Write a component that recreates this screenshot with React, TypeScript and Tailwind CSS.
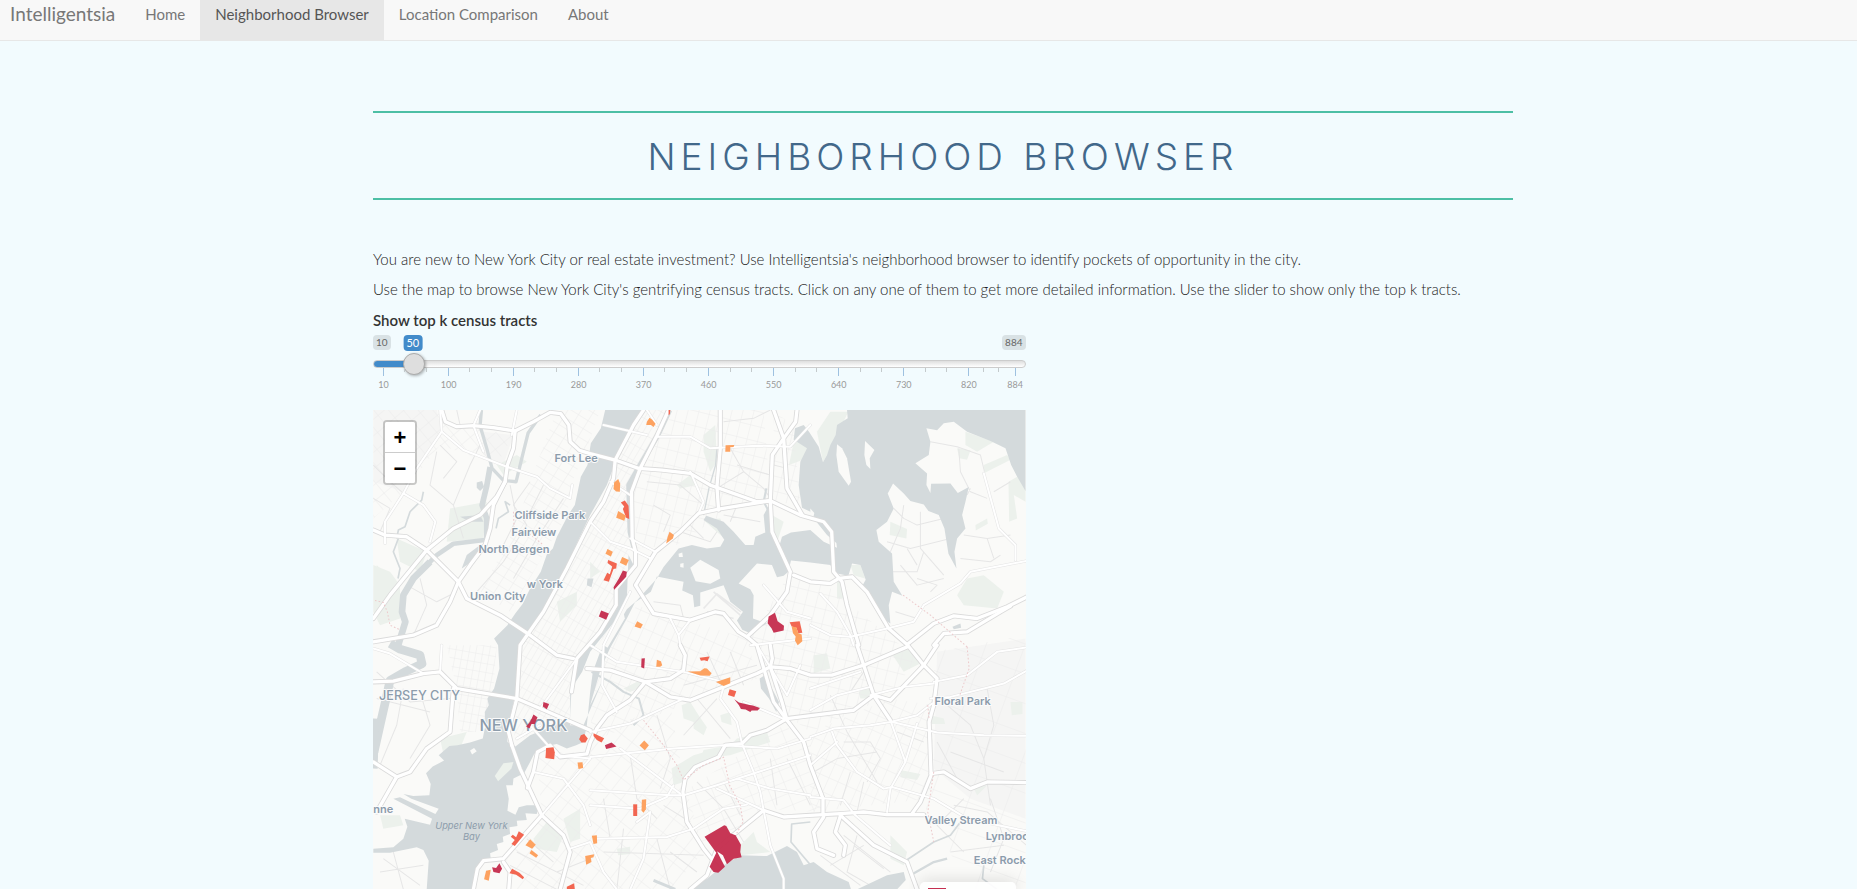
import { useState } from "react";

const NAV = ["Home", "Neighborhood Browser", "Location Comparison", "About"];
const MIN = 10;
const MAX = 884;
const TICKS = [10, 100, 190, 280, 370, 460, 550, 640, 730, 820, 884];

const LAND = "#fafaf8";
const WATER = "#d4dadc";

/* Drawing space of the map: three units to one CSS pixel. */
const WATER_AREAS = [
  // Hudson River and Upper Bay
  "M705 15L692 70L662 115L652 180L632 215L622 262L614 300L594 330L560 396L548 430L530 448L512 500L480 550L458 596L436 624L412 660L372 700L384 720L388 790L372 850L352 880L356 900L344 920L346 960L338 1000L300 1012L262 1020L238 1022L206 1050L222 1066L188 1084L168 1104L182 1136L178 1170L130 1172L100 1166L124 1180L206 1210L196 1226L90 1176L70 1180L186 1240L180 1258L104 1240L112 1264L100 1300L70 1326L10 1330L10 1342L60 1342L140 1326L160 1334L176 1366L170 1452L312 1452L322 1384L340 1364L362 1360L360 1344L384 1334L380 1316L400 1310L398 1294L420 1286L418 1266L442 1262L440 1246L470 1244L466 1224L500 1226L505 1200L470 1200L446 1206L436 1228L412 1216L416 1180L408 1140L428 1140L430 1120L462 1104L480 1070L492 1046L520 1024L560 1016L590 1030L618 1020L640 1010L650 960L660 860L668 800L690 740L706 720L742 660L770 612L800 586L860 520L880 486L925 430L965 420L1010 430L1050 425L1062 404L1040 370L1000 345L1008 332L1060 350L1090 380L1125 420L1150 420L1155 395L1185 382L1180 330L1196 300L1208 330L1205 384L1225 430L1235 395L1262 382L1320 375L1360 410L1400 428L1398 414L1370 390L1340 352L1320 320L1295 308L1285 240L1290 170L1310 130L1270 104L1274 70L1300 60L1316 80L1345 125L1358 172L1370 150L1380 120L1396 90L1400 60L1432 40L1430 15L1965 15L1965 258L1940 215L1922 180L1905 130L1860 108L1790 80L1750 50L1720 55L1700 76L1668 70L1680 110L1675 150L1635 175L1670 205L1668 240L1680 264L1682 236L1740 235L1762 264L1795 246L1785 290L1775 330L1785 370L1760 400L1752 440L1758 490L1734 446L1722 370L1705 330L1674 318L1660 298L1620 288L1600 265L1568 235L1552 265L1570 310L1550 350L1518 375L1525 410L1565 445L1570 530L1596 572L1565 560L1555 600L1560 655L1535 640L1505 590L1476 542L1486 524L1470 480L1445 475L1434 512L1392 504L1380 480L1320 472L1262 466L1254 500L1240 512L1220 516L1205 480L1160 475L1105 535L1140 552L1150 570L1148 640L1190 655L1140 684L1116 674L1100 646L1118 620L1080 590L1060 540L990 562L990 602L972 606L968 570L936 556L940 530L860 514L842 560L812 580L794 592L770 640L720 728L692 790L660 900L700 820L640 960L600 960L600 860L608 800L640 730L700 660L740 610L735 565L790 480L775 450L770 580L740 640L660 740L636 800L604 850L600 940L540 966L480 990L436 1024L412 1010L412 970L440 850L444 720L462 716L520 610L590 480L660 330L710 240L740 160L785 60L815 15Z",
  // Jamaica Bay
  "M950 1452L1010 1420L1060 1380L1110 1350L1190 1352L1250 1322L1280 1340L1300 1380L1330 1370L1370 1400L1435 1430L1442 1452Z",
  "M1460 1452L1550 1410L1600 1400L1606 1424L1580 1452Z",
  "M270 335L330 330L340 350L300 350Z",
  "M320 232L336 228L342 246L330 258L320 248Z",
  "M290 450L330 420L320 460L275 490Z",
  "M1168 820L1190 806L1200 840L1226 890L1218 920L1196 880L1172 850Z",
  "M1746 665L1770 655L1772 668L1750 672Z",
  "M652 520L670 520L664 546L650 540Z",
];

const RIVERS: [string, number][] = [
  ["M512 30L474 84L460 140L438 230L400 226L366 190L350 130L330 62L334 15", 10],
  ["M360 186L350 242L336 300L350 340L350 404", 17],
  ["M350 404L250 416L200 450L150 500", 14],
  ["M180 470L130 520L100 570L96 620L106 650L80 735", 20],
  ["M60 715L90 732L150 750L156 776L104 800L60 826L46 890L30 960L12 1040", 26],
  ["M16 940L12 1090", 22],
  ["M898 15L862 92L816 170L776 240L780 380L792 430", 16],
  ["M160 260L155 285L120 320L105 365L85 375L80 400", 5],
  ["M85 400L70 440L90 490L84 520", 5],
  ["M420 300L405 290L415 320L385 340L378 370", 5],
  ["M1040 130L1036 180L1016 250L1000 330", 4],
  ["M1188 250L1180 290L1196 320", 6],
  ["M664 800L720 830L760 860L806 880L820 930L790 960", 6],
  ["M1000 1330L1060 1398", 5],
  ["M850 1425L915 1452", 9],
  ["M1320 1250L1264 1256L1262 1310L1320 1378", 5],
  ["M1600 1370L1690 1310L1740 1290L1770 1250", 5],
  ["M1620 1410L1690 1370L1730 1360", 7],
  ["M1840 1380L1836 1420L1880 1452", 5],
];

const ISLANDS = [
  "M960 488L990 464L1045 495L1050 520L1020 536L976 528Z",
  "M925 446L936 442L938 456L926 456Z",
  "M930 476L940 474L940 488L930 486Z",
  "M1400 118L1415 130L1430 160L1442 230L1435 242L1405 200L1398 150Z",
  "M1484 108L1512 135L1498 160L1500 192L1488 180L1482 150Z",
  "M700 720L742 650L760 622L764 640L712 728Z",
  "M1320 310L1332 324L1328 340L1320 344Z",
];

const PARKS = [
  "M10 480L60 500L90 540L90 640L30 660L10 620Z",
  "M80 400L170 440L150 500L90 470Z",
  "M240 310L350 290L340 400L230 410Z",
  "M380 180L440 150L470 170L400 210Z",
  "M560 590L620 560L620 600L570 650Z",
  "M20 480L80 540L84 640L30 620Z",
  "M1000 90L1035 60L1040 170L1020 200L1000 140Z",
  "M920 240L960 210L980 240L930 250Z",
  "M1000 345L1050 340L1066 380L1062 400Z",
  "M1270 110L1310 110L1310 160L1256 180Z",
  "M1340 80L1380 20L1434 20L1400 90L1370 150L1358 172Z",
  "M1188 320L1240 350L1224 400L1210 420Z",
  "M660 470L690 500L660 520Z",
  "M1440 480L1470 480L1484 520L1450 510Z",
  "M1560 350L1610 372L1608 400L1558 390Z",
  "M1785 80L1870 110L1820 140L1785 120Z",
  "M1840 180L1910 150L1920 164L1842 204Z",
  "M1914 230L1940 215L1965 250L1965 290L1930 270L1940 340L1916 350Z",
  "M1790 520L1840 510L1900 560L1880 610L1780 600L1760 570Z",
  "M1760 130L1800 136L1790 164L1766 160Z",
  "M1815 360L1850 340L1852 356L1816 376Z",
  "M1400 520L1420 530L1420 580L1400 580Z",
  "M934 900L960 890L985 930L1010 966L1000 990L970 970L970 950L940 940Z",
  "M1050 930L1080 920L1084 960L1054 950Z",
  "M1000 1034L1080 1020L1100 1000L1190 980L1200 1010L1080 1050L990 1060Z",
  "M904 1090L970 1050L1040 1030L1060 1050L980 1080L940 1130L910 1140Z",
  "M760 850L820 820L824 840L780 860Z",
  "M1110 1320L1150 1280L1160 1310L1200 1340L1110 1350Z",
  "M740 1330L780 1324L780 1346L744 1350Z",
  "M490 1300L530 1250L580 1290L560 1340L500 1330Z",
  "M580 1240L630 1210L630 1300L600 1310Z",
  "M210 1000L290 980L270 1030L220 1046Z",
  "M374 1112L400 1074L430 1070L424 1090L384 1128Z",
  "M1560 740L1630 730L1660 770L1600 800Z",
  "M1465 860L1500 840L1530 880L1470 880Z",
  "M1590 1094L1650 1106L1640 1124L1590 1116Z",
  "M1680 930L1720 940L1724 956L1684 956Z",
  "M1920 890L1956 890L1956 926L1924 930Z",
  "M1330 750L1370 744L1380 790L1330 804Z",
  "M1810 1150L1850 1140L1820 1170Z",
  "M1560 1290L1610 1340L1600 1380L1560 1360Z",
  "M30 1230L90 1230L100 1260L40 1270Z",
];

const HIGHWAYS = [
  "M215 15L226 50L260 65L310 62L370 68L435 78L490 50L540 22L572 26L596 60L600 110L628 136L660 146L735 165L805 190L875 195L960 205L1020 240L1160 290L1200 287L1290 330L1360 350L1384 380L1390 500L1415 530L1430 600L1465 720",
  "M435 78L430 130L412 180L405 230L370 300L360 370L345 420L300 480L265 530L240 590L200 660L130 690L10 710",
  "M10 375L45 390L110 395L170 435L265 530L290 580L390 630L480 690L560 750L610 760",
  "M10 640L60 570L170 435L250 370L330 330L380 275L405 230",
  "M820 15L790 60L735 165L730 220L700 290L660 350L590 490L520 620L450 720L440 880L415 980L425 1020",
  "M895 15L860 92L810 190L784 260L786 400L796 440L796 480L738 550L738 600L690 680L620 760L604 860",
  "M1050 15L1050 130L1040 245L1045 315",
  "M1200 287L1045 312L985 325L930 380L856 440L834 476L796 540L850 625L960 645L1035 620L1060 625L1105 680L1130 695L1160 720L1210 890L1250 945L1300 1010L1320 1080L1358 1180L1358 1228",
  "M1210 15L1240 100L1206 150L1200 287L1205 380L1260 500L1250 560L1200 630L1130 695",
  "M1280 15L1276 50L1240 100L1250 250L1296 330",
  "M1270 510L1320 530L1380 535L1405 520L1445 515L1490 560L1555 670L1610 718L1660 780L1700 820L1690 900L1676 950L1682 1110L1650 1190L1625 1225",
  "M1610 718L1690 655L1750 632L1820 640L1910 605L1980 570",
  "M1690 720L1720 685L1790 680L1840 650L1890 620L1920 603",
  "M1700 720L1660 780L1560 885L1510 870L1450 915L1370 925L1250 940L1190 975L1140 990L1115 1015L1065 1020L1045 1055L975 1085L945 1120L938 1160L950 1250L1000 1330L1024 1360",
  "M650 790L720 795L825 830L900 875L960 885L1060 845L1160 805L1200 785L1260 790L1320 810L1385 810L1480 780L1610 725",
  "M825 830L780 885L710 930L680 970L660 1012L650 1046L570 1055L540 1020L502 1040L490 1100L472 1148",
  "M825 830L900 820L940 795L945 750L930 720",
  "M1200 720L1206 760L1200 785L1235 890L1250 945",
  "M425 1020L450 1090L515 1230L580 1290L600 1340L570 1452",
  "M515 1230L400 1360L340 1366L322 1390L310 1452",
  "M400 1370L420 1400L416 1452",
  "M960 1452L1010 1410L1040 1330L1100 1280L1180 1215L1240 1235L1320 1230L1410 1225L1480 1220L1550 1228L1660 1228",
  "M1682 1105L1720 1100L1800 1150L1850 1130L1980 1132",
  "M1460 720L1510 870L1560 945",
  "M10 830L70 828L160 805L210 800L260 850L440 880L510 910L660 975",
  "M10 1070L80 1115L60 1150L20 1220",
  "M80 1115L120 1100L170 1030L240 980L250 850",
  "M1410 1230L1510 1320L1610 1370L1640 1452",
  "M1410 1232L1395 1280L1425 1320L1420 1350",
  "M1360 1235L1330 1280L1340 1330L1390 1350",
];

const ROADS = [
  "M45 415L45 350L100 265L140 190L215 80L210 15",
  "M215 80L280 135L410 185L500 215L540 250L600 280L606 240",
  "M100 265L160 300L196 350L180 410",
  "M440 15L425 90M330 15L310 62L340 140",
  "M860 95L960 95L1020 130L1160 122L1260 125L1320 60",
  "M780 400L856 440M830 15L860 60",
  "M900 640L925 690L930 720M960 645L925 690",
  "M1440 695L1550 670L1630 650L1660 600L1770 535L1800 500L1980 465",
  "M1840 205L1885 370L1935 420L1935 465",
  "M1320 660L1380 690L1440 695M1350 565L1400 620L1440 690L1450 720",
  "M1060 845L1050 880L1100 950L1115 1015L1150 1100L1170 1160L1180 1215L1200 1320L1240 1420L1240 1452",
  "M660 1155L900 1170L940 1170L1040 1140L1320 1050",
  "M660 1200L810 1210L890 1175L910 1140M750 1030L930 1165",
  "M680 1300L890 1295L970 1270L1060 1210L1130 1198",
  "M1040 1150L1180 1215M660 980L780 955L940 880",
  "M660 1055L910 1030L1060 1020L1220 1030L1320 1000",
  "M1385 980L1400 1020L1460 1100L1540 1150L1565 1145L1690 1180L1790 1240L1980 1280",
  "M1565 950L1700 982L1840 990L1980 992",
  "M1320 995L1390 970L1500 960L1560 950L1640 930L1685 895",
  "M1680 880L1740 875L1900 835L1980 790",
  "M1640 955L1605 1070L1560 1150L1550 1220",
  "M1320 1175L1420 1185L1455 1230L1560 1320",
  "M1690 830L1790 810L1880 740L1980 725",
  "M1560 945L1605 1070M1320 1080L1400 1010",
  "M160 805L60 745L10 730M210 800L215 720",
  "M480 960L560 1050L660 1060M515 1230L660 1060",
  "M510 910L620 760L660 715M440 1000L510 960",
  "M490 1100L580 1120L640 1200L660 1260",
  "M600 1330L660 1310L700 1400L740 1452M800 1250L840 1220L820 1360L780 1452",
  "M1320 915L1400 870L1500 845M1320 850L1470 800",
  "M1290 780L1250 870L1160 720M1120 890L1250 945",
  "M660 720L740 770L940 800L1060 830M700 720L696 840L740 920",
  "M1500 870L1600 845L1690 835M1100 1120L1200 1150L1320 1170",
  "M660 350L720 410L780 430L840 460M700 60L830 90M720 230L780 270",
  "M960 200L1000 290L985 325M780 560L700 720",
  "M1180 540L1250 620L1320 640M1140 720L1320 700",
];

const STREETS = [
  "M260 15L270 60M200 140L180 240L250 300L300 180L330 120M250 300L280 400",
  "M10 180L60 230L100 265M10 280L60 310L30 380M210 120L260 170L220 220",
  "M110 540L200 590L260 560M150 520L170 600L130 690M420 240L440 340L390 440",
  "M480 230L430 300L470 360L400 470L320 560M520 240L470 340M580 280L500 400L430 520",
  "M830 230L930 240L1000 300M850 300L900 330L880 380M1060 50L1150 40L1200 15M1080 130L1120 200L1040 250",
  "M1120 200L1180 250L1200 280M1060 330L1170 350M1080 350L1100 300M1100 180L1200 210M1210 180L1250 190",
  "M900 480L980 440M930 380L1020 410L1040 380M960 360L1000 400M850 590L930 600L940 640",
  "M1570 310L1600 340L1640 360L1720 340M1600 300L1590 370L1560 440M1550 410L1620 430L1740 400M1650 320L1650 430L1720 510M1610 430L1640 480M1590 480L1640 540L1720 520M1680 110L1760 125L1830 150L1842 200M1765 130L1770 200L1800 260L1850 280M1800 250L1790 270M1780 390L1850 400L1920 390M1770 460L1860 470L1890 450M1850 400L1870 460M1870 260L1920 230M1640 520L1700 540L1680 560M1575 620L1640 640M1560 500L1640 500L1660 440",
  "M1730 900L1800 960L1840 1060L1860 1200M1850 850L1870 960L1840 1060M1740 1040L1900 1100M1700 1010L1760 1120M1780 1180L1700 1260L1780 1340M1740 1340L1900 1320M1860 1180L1900 1300L1860 1400M1750 1200L1850 1220L1980 1330",
  "M1500 770L1440 860M1380 870L1430 980L1520 1130M1420 1010L1500 1010L1530 1060L1490 1130M1400 1060L1520 1040M1580 980L1660 1010M1440 1100L1410 1200M1330 1100L1400 1060M1480 1130L1460 1220",
  "M1420 1290L1560 1400M1350 1350L1470 1440M1460 1290L1430 1400L1500 1440M1380 1380L1480 1320M1450 1320L1540 1390",
  "M700 1340L1000 1350M760 1270L740 1452M860 1300L900 1452M900 1340L980 1400M700 1180L720 1300M780 1050L800 1180L860 1240M860 930L900 1060L870 1150M980 1130L1060 1210L1120 1310M1060 1130L1110 1230M880 1200L960 1250",
  "M1010 740L1060 850M1080 740L1120 840M940 840L1160 780M980 880L1080 1000M1250 1060L1320 1200M1200 1060L1220 1200M1040 880L940 990",
  "M420 1380L560 1452M440 1340L640 1440M560 1400L660 1360M470 1300L550 1370M20 800L120 890L240 880M100 850L80 960L30 1080M150 860L180 960L120 1060M20 880L180 920M40 1360L150 1440M70 1340L100 1452M30 1400L160 1380",
];

const DOTTED = [
  "M15 586L40 592L52 620L60 660L90 674",
  "M430 320L432 370L470 380L520 420",
  "M820 945L880 1020L920 1080L940 1124L1000 1080L1060 1056L1078 1140L1110 1200L1118 1250L1096 1290",
  "M1598 570L1680 630L1790 725M1790 725L1796 790L1768 870",
  "M1690 1100L1672 1220L1690 1310M1672 900L1676 940",
];

/* Regions drawn with a regular street grid. */
const GRIDS: [string, string][] = [
  ["M830 15L790 70L735 170L700 290L520 620L450 740L440 900L430 1010L600 940L604 830L740 640L735 560L775 470L776 250L890 15Z", "url(#g30)"],
  ["M560 15L690 15L650 130L610 220L590 330L420 620L330 560L440 360L480 230Z", "url(#g32)"],
  ["M10 15L210 15L240 60L430 90L380 180L210 120L100 260L10 340Z", "url(#g55)"],
  ["M230 720L380 720L370 850L340 980L270 980L260 850Z", "url(#g10)"],
  ["M910 15L1180 15L1200 280L1050 310L1040 340L920 420L800 430L790 250Z", "url(#g12)"],
  ["M1210 20L1270 60L1290 300L1210 290Z", "url(#g12)"],
  ["M800 600L930 640L1130 700L1160 820L960 890L660 1010L670 800Z", "url(#g20)"],
  ["M500 1040L650 1040L700 970L900 900L940 1120L1000 1340L900 1452L420 1452L400 1370L515 1230Z", "url(#g5)"],
  ["M940 1160L1240 960L1320 1010L1350 1220L1180 1210L1100 1290L1000 1330Z", "url(#g70)"],
  ["M1140 700L1260 500L1380 550L1540 680L1640 760L1560 870L1320 980L1250 930Z", "url(#g12)"],
  ["M1320 980L1560 880L1690 900L1680 1180L1320 1220Z", "url(#g20)"],
  ["M1690 740L1965 690L1965 1452L1800 1452L1660 1200L1690 900Z", "url(#gWide)"],
];

const ORANGE = "#fd9f5b";
const RED = "#f2614b";
const CRIMSON = "#c52f50";

const TRACTS: [string, string][] = [
  ["M838 38L846 44L856 56L850 66L842 60L828 60L830 50Z", ORANGE],
  ["M895 15L900 15L899 28L895 30Z", RED],
  ["M1066 121L1092 120L1090 126L1080 127L1080 140L1065 140Z", ORANGE],
  ["M732 232L744 222L750 236L749 260L738 259L730 252Z", ORANGE],
  ["M752 292L764 286L775 302L777 342L768 338L762 322L758 312L762 304Z", RED],
  ["M744 318L768 332L762 347L738 338Z", ORANGE],
  ["M898 380L911 390L908 400L888 415L892 396Z", ORANGE],
  ["M712 432L728 440L722 454L706 446Z", ORANGE],
  ["M756 456L776 465L768 482L749 473Z", ORANGE],
  ["M714 465L740 475L738 490L730 492L716 530L700 525L711 503L719 507L726 484L712 474Z", RED],
  ["M758 496L770 500L768 515L752 532L732 554L730 546L746 520Z", CRIMSON],
  ["M693 616L716 625L708 644L686 634Z", CRIMSON],
  ["M801 648L818 658L811 670L793 664Z", ORANGE],
  ["M1195 634L1214 623L1222 648L1241 662L1240 676L1210 683L1204 670L1192 654Z", CRIMSON],
  ["M1258 651L1288 648L1296 683L1284 684L1278 668L1264 664Z", RED],
  ["M1264 664L1278 666L1284 684L1294 688L1296 708L1282 720L1274 706L1276 694L1268 684Z", ORANGE],
  ["M814 760L824 759L822 790L813 786Z", CRIMSON],
  ["M860 764L872 768L876 780L870 785L858 785Z", ORANGE],
  ["M988 758L1018 754L1012 768L1002 765L992 767Z", RED],
  ["M952 799L990 798L1002 789L1010 790L1024 804L1018 812L990 811Z", ORANGE],
  ["M1037 830L1080 816L1080 834L1060 842Z", ORANGE],
  ["M1078 852L1098 858L1092 875L1073 869Z", RED],
  ["M1092 882L1106 892L1138 899L1148 901L1169 908L1162 916L1144 916L1140 920L1126 913L1112 911L1106 900Z", CRIMSON],
  ["M670 984L702 999L694 1012L680 1004L670 992Z", RED],
  ["M704 1020L724 1012L739 1024L708 1031Z", CRIMSON],
  ["M822 1006L836 1020L824 1035L808 1021Z", ORANGE],
  ["M789 1197L801 1197L801 1232L789 1232Z", RED],
  ["M815 1183L828 1182L827 1212L820 1222L814 1216Z", ORANGE],
  ["M665 1291L680 1290L681 1314L670 1316Z", ORANGE],
  ["M645 1352L672 1347L670 1356L662 1358L664 1370L648 1378Z", ORANGE],
  ["M1003 1294L1062 1260L1068 1262L1080 1284L1096 1290L1112 1318L1110 1340L1114 1356L1090 1360L1070 1377L1058 1350L1040 1338L1064 1384L1044 1402L1030 1400L1018 1384L1038 1342Z", CRIMSON],
  ["M520 890L537 896L530 912L518 904Z", CRIMSON],
  ["M490 928L502 936L494 956L484 956L478 970L468 964L480 950Z", CRIMSON],
  ["M632 990L642 986L653 1000L646 1012L634 1012L627 1002Z", RED],
  ["M528 1028L550 1026L554 1042L552 1062L526 1058Z", RED],
  ["M622 1072L637 1071L639 1088L625 1091Z", ORANGE],
  ["M446 1278L462 1288L434 1322L424 1316L434 1304L422 1294L428 1288L438 1296Z", RED],
  ["M480 1302L497 1318L486 1330L466 1320Z", ORANGE],
  ["M484 1334L504 1350L498 1357L478 1344Z", ORANGE],
  ["M366 1386L378 1388L388 1374L396 1390L388 1404L370 1400Z", CRIMSON],
  ["M348 1396L362 1393L356 1426L342 1422Z", ORANGE],
  ["M426 1390L448 1402L462 1416L458 1422L438 1408L418 1404Z", RED],
  ["M590 1444L612 1434L614 1452L590 1452Z", RED],
];

const PLACES: [string, number, number, "sm" | "lg" | "xl"][] = [
  ["Fort Lee", 553, 171, "sm"],
  ["Cliffside Park", 433, 343, "sm"],
  ["Fairview", 424, 393, "sm"],
  ["North Bergen", 325, 443, "sm"],
  ["w York", 470, 549, "sm"],
  ["Union City", 300, 585, "sm"],
  ["nne", 10, 1224, "sm"],
  ["Floral Park", 1692, 900, "sm"],
  ["Valley Stream", 1662, 1256, "sm"],
  ["Lynbroo", 1846, 1304, "sm"],
  ["East Rock", 1810, 1377, "sm"],
  ["JERSEY CITY", 27, 885, "lg"],
  ["NEW YORK", 328, 976, "xl"],
];

const PLACE_SIZE = {
  sm: "text-[33px] font-semibold",
  lg: "text-[38px] font-medium",
  xl: "text-[49px] font-medium",
};

function Grid({ id, angle, w, h }: { id: string; angle: number; w: number; h: number }) {
  return (
    <pattern id={id} width={w} height={h} patternUnits="userSpaceOnUse" patternTransform={`rotate(${angle})`}>
      <path d={`M0 0H${w}M0 0V${h}`} stroke="#ececec" strokeWidth="3" fill="none" />
    </pattern>
  );
}

function CityMap() {
  return (
    <svg
      viewBox="9 15 1956 1437"
      preserveAspectRatio="xMinYMin slice"
      className="block h-full w-full"
      role="img"
      aria-label="Map of New York City census tracts"
    >
      <defs>
        <Grid id="g30" angle={30} w={17} h={42} />
        <Grid id="g32" angle={32} w={34} h={28} />
        <Grid id="g55" angle={50} w={38} h={34} />
        <Grid id="g10" angle={10} w={20} h={26} />
        <Grid id="g12" angle={14} w={32} h={44} />
        <Grid id="g20" angle={24} w={30} h={46} />
        <Grid id="g5" angle={38} w={40} h={52} />
        <Grid id="g70" angle={68} w={36} h={52} />
        <Grid id="gWide" angle={20} w={110} h={84} />
      </defs>
      <rect x="0" y="0" width="1980" height="2400" fill={LAND} />
      <path d="M1700 740L1965 700L1965 1240L1800 1180L1690 1090Z" fill="#f5f5f4" />
      <path d="M10 15L200 15L215 80L100 260L10 230ZM340 80L430 90L400 180L340 150Z" fill="#f5f5f4" />
      {PARKS.map((d) => (
        <path key={d} d={d} fill="#ecf1ec" />
      ))}
      {GRIDS.map(([d, fill]) => (
        <path key={d} d={d} fill={fill} />
      ))}
      <g fill="none" stroke="#e6e6e6" strokeWidth="3" strokeLinejoin="round">
        {STREETS.map((d) => (
          <path key={d} d={d} />
        ))}
      </g>
      {WATER_AREAS.map((d) => (
        <path key={d} d={d} fill={WATER} fillRule="nonzero" />
      ))}
      {RIVERS.map(([d, w]) => (
        <path key={d} d={d} fill="none" stroke={WATER} strokeWidth={w} strokeLinejoin="round" />
      ))}
      {ISLANDS.map((d) => (
        <path key={d} d={d} fill={LAND} />
      ))}
      <path d="M374 1112L400 1074L430 1070L424 1090L384 1128Z" fill="#ecf1ec" />
      <path d="M300 1036L312 1028L320 1038L306 1048Z" fill={LAND} />
      <path d="M1000 610L1040 566L1112 620M1010 620L1090 640M1030 560L1110 630" stroke="#e9e9e9" strokeWidth="5" fill="none" />
      <g fill="none" strokeLinejoin="round" strokeLinecap="round">
        {ROADS.map((d) => (
          <path key={d} d={d} stroke="#e4e4e4" strokeWidth="9" />
        ))}
        {HIGHWAYS.map((d) => (
          <path key={d} d={d} stroke="#dadada" strokeWidth="15" />
        ))}
        {ROADS.map((d) => (
          <path key={d} d={d} stroke="#ffffff" strokeWidth="6" />
        ))}
        {HIGHWAYS.map((d) => (
          <path key={d} d={d} stroke="#ffffff" strokeWidth="10" />
        ))}
      </g>
      <g fill="none" stroke="#ecc9cb" strokeWidth="3" strokeDasharray="5 6">
        {DOTTED.map((d) => (
          <path key={d} d={d} />
        ))}
      </g>
      <g
        className="font-['Inter',sans-serif]"
        fill="#8c9cab"
        stroke="#fbfbfb"
        strokeWidth="6"
        strokeLinejoin="round"
        paintOrder="stroke"
      >
        {PLACES.map(([name, x, y, size]) => (
          <text key={name} x={x} y={y} className={PLACE_SIZE[size]}>
            {name}
          </text>
        ))}
      </g>
      <g className="font-['Inter',sans-serif] text-[28px] italic" fill="#8c9cab" textAnchor="middle">
        <text x="304" y="1271">Upper New York</text>
        <text x="304" y="1303">Bay</text>
      </g>
      {TRACTS.map(([d, fill]) => (
        <path key={d} d={d} fill={fill} fillOpacity="0.97" />
      ))}
    </svg>
  );
}

function TractSlider() {
  const [value, setValue] = useState(50);
  const ratio = (value - MIN) / (MAX - MIN);
  const stop = `calc(11px + (100% - 22px) * ${ratio})`;
  return (
    <div className="text-[10px] leading-[15px] text-[#666]">
      <label htmlFor="top-k" className="block text-[15px] leading-5 font-semibold text-[#333]">
        Show top k census tracts
      </label>
      <div className="relative mt-[5px] flex justify-between">
        <span className="rounded bg-[#d9e2e5] px-[3px]">{MIN}</span>
        <span className="rounded bg-[#d9e2e5] px-[3px]">{MAX}</span>
        <output
          htmlFor="top-k"
          className="absolute top-0 -translate-x-1/2 rounded bg-[#428bca] px-[3px] text-[11px] leading-4 text-white"
          style={{ left: stop }}
        >
          {value}
        </output>
      </div>
      <input
        id="top-k"
        type="range"
        min={MIN}
        max={MAX}
        value={value}
        onChange={(e) => setValue(Number(e.target.value))}
        className="mt-[10px] block h-2 w-full cursor-pointer appearance-none rounded-lg border border-[#ccc] bg-[#ececec] outline-none [&::-webkit-slider-thumb]:size-[22px] [&::-webkit-slider-thumb]:appearance-none [&::-webkit-slider-thumb]:rounded-full [&::-webkit-slider-thumb]:border [&::-webkit-slider-thumb]:border-[#ababab] [&::-webkit-slider-thumb]:bg-[#dedede] [&::-webkit-slider-thumb]:shadow-[1px_1px_3px_rgba(0,0,0,0.3)]"
        style={{
          background: `linear-gradient(to right, #428bca ${stop}, transparent ${stop}) border-box, linear-gradient(#dedede, #ffffff)`,
        }}
      />
      <div className="flex px-[10px] text-[9px] leading-3 text-[#999]">
        {TICKS.map((tick, i) => {
          const next = TICKS[i + 1];
          return (
            <div key={tick} className="min-w-0" style={{ flex: next ? `${next - tick} 1 0px` : "0 0 1px" }}>
              <div className="flex h-2 justify-between">
                <i className="h-2 w-px bg-[#9ec1e0]" />
                {next && <i className="h-1 w-px bg-[#c4cacc]" />}
                {next && <i className="h-1 w-px bg-[#c4cacc]" />}
                {next && <i className="w-px" />}
              </div>
              <div className="mt-[3px] flex w-px justify-center">
                <span>{tick}</span>
              </div>
            </div>
          );
        })}
      </div>
    </div>
  );
}

export default function App() {
  return (
    <div className="flex h-screen flex-col overflow-hidden bg-[#f2fbfe] font-['Lato','Open_Sans',sans-serif]">
      <nav className="flex h-[41px] shrink-0 border-b border-[#e7e7e7] bg-[#f8f8f8] text-[15px] leading-5 text-[#777]">
        <a href="#" className="pt-1 pr-[15px] pl-[10px] text-[19px]">
          Intelligentsia
        </a>
        {NAV.map((item) => (
          <a
            key={item}
            href="#"
            aria-current={item === "Neighborhood Browser" ? "page" : undefined}
            className="px-[15px] pt-1 aria-[current=page]:bg-[#e7e7e7] aria-[current=page]:text-[#555]"
          >
            {item}
          </a>
        ))}
      </nav>
      <main className="mx-auto flex min-h-0 w-full max-w-[1169px] flex-1 flex-col pt-[70px] pl-[29px]">
        <h1 className="border-y-2 border-[#4dbfa5] pt-[23px] pb-[21px] text-center font-['Inter',sans-serif] text-[37px] leading-[41px] font-light tracking-[5px] text-[#42688a] uppercase">
          Neighborhood Browser
        </h1>
        <div className="mt-[49px] flex flex-col gap-[10px] text-[15px] leading-5 font-light text-[#222]">
          <p>
            You are new to New York City or real estate investment? Use Intelligentsia's neighborhood browser to identify
            pockets of opportunity in the city.
          </p>
          <p>
            Use the map to browse New York City's gentrifying census tracts. Click on any one of them to get more detailed
            information. Use the slider to show only the top k tracts.
          </p>
        </div>
        <div className="mt-[11px] flex min-h-0 w-[calc((100%+30px)*7/12-30px)] flex-1 flex-col">
          <TractSlider />
          <section className="relative mt-[19px] min-h-0 flex-1 overflow-hidden">
            <CityMap />
            <div className="absolute top-[10px] left-[10px] flex flex-col overflow-hidden rounded border-2 border-black/20 bg-clip-padding">
              <button
                aria-label="Zoom in"
                className="flex size-[30px] items-center justify-center bg-white font-['Liberation_Sans',sans-serif] text-[22px] font-bold text-black"
              >
                +
              </button>
              <button
                aria-label="Zoom out"
                className="flex h-[31px] w-[30px] items-center justify-center border-t border-[#ccc] bg-white font-['Liberation_Sans',sans-serif] text-[22px] font-bold text-black"
              >
                −
              </button>
            </div>
            <div className="absolute right-[10px] bottom-0 h-[7px] w-24 rounded-t-[5px] bg-white/90 px-2 pt-[6px] shadow-[0_0_15px_rgba(0,0,0,0.2)]">
              <div className="h-px w-[18px] bg-[#c52f50]" />
            </div>
          </section>
        </div>
      </main>
    </div>
  );
}
